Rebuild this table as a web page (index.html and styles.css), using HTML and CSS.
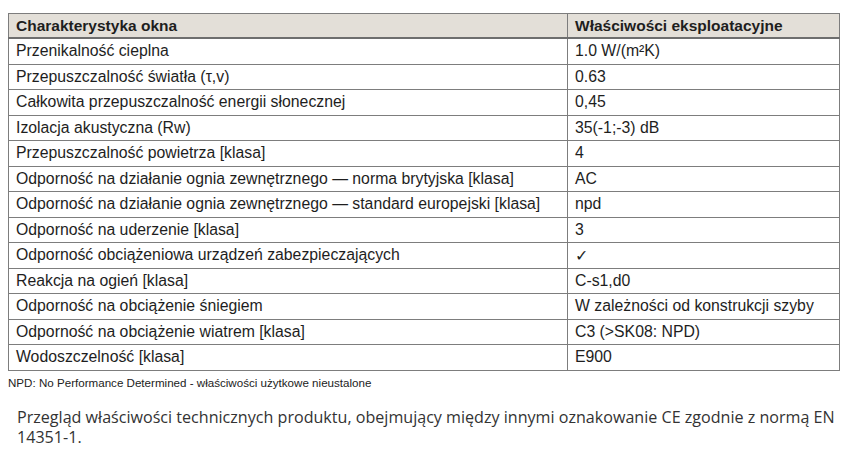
FILE: index.html
```html
<!DOCTYPE html>
<html lang="pl">
<head>
<meta charset="utf-8">
<link rel="stylesheet" href="styles.css">
</head>
<body>
<div class="page">
  <table class="spec">
    <thead>
      <tr><th class="c1">Charakterystyka okna</th><th class="c2">Właściwości eksploatacyjne</th></tr>
    </thead>
    <tbody>
      <tr><td>Przenikalność cieplna</td><td>1.0 W/(m²K)</td></tr>
      <tr><td>Przepuszczalność światła (τ,v)</td><td>0.63</td></tr>
      <tr><td>Całkowita przepuszczalność energii słonecznej</td><td>0,45</td></tr>
      <tr><td>Izolacja akustyczna (Rw)</td><td>35(-1;-3) dB</td></tr>
      <tr><td>Przepuszczalność powietrza [klasa]</td><td>4</td></tr>
      <tr><td>Odporność na działanie ognia zewnętrznego — norma brytyjska [klasa]</td><td>AC</td></tr>
      <tr><td>Odporność na działanie ognia zewnętrznego — standard europejski [klasa]</td><td>npd</td></tr>
      <tr><td>Odporność na uderzenie [klasa]</td><td>3</td></tr>
      <tr><td>Odporność obciążeniowa urządzeń zabezpieczających</td><td>✓</td></tr>
      <tr><td>Reakcja na ogień [klasa]</td><td>C-s1,d0</td></tr>
      <tr><td>Odporność na obciążenie śniegiem</td><td>W zależności od konstrukcji szyby</td></tr>
      <tr><td>Odporność na obciążenie wiatrem [klasa]</td><td>C3 (&gt;SK08: NPD)</td></tr>
      <tr><td>Wodoszczelność [klasa]</td><td>E900</td></tr>
    </tbody>
  </table>
  <p class="note">NPD: No Performance Determined - właściwości użytkowe nieustalone</p>
  <p class="caption">Przegląd właściwości technicznych produktu, obejmujący między innymi oznakowanie CE zgodnie z normą EN 14351-1.</p>
</div>
</body>
</html>
```
FILE: styles.css
```css
html, body {
  margin: 0;
  padding: 0;
  background: #ffffff;
}
.page {
  padding: 13px 0 0 8px;
  width: 832px;
  font-family: "Liberation Sans", Arial, sans-serif;
  color: #1e1e1e;
}
.spec {
  border-collapse: collapse;
  width: 832px;
  table-layout: fixed;
}
.spec th, .spec td {
  border: 1px solid #7d7d7d;
  text-align: left;
  padding: 0 7px;
  font-size: 15.8px;
  white-space: nowrap;
}
.spec th {
  background: #e3dfd8;
  font-weight: bold;
  font-size: 15.5px;
  height: 23px;
  border-bottom: 2px solid #6e6e6e;
}
.spec td {
  height: 24.5px;
}
.spec .c1 { width: 544px; }
.note {
  margin: 5px 0 0 0;
  font-size: 11.6px;
  color: #222;
}
.caption {
  margin: 18px 0 0 9px;
  font-family: "Open Sans", "Noto Sans", sans-serif;
  font-size: 16.1px;
  line-height: 20px;
  color: #333;
  width: 828px;
}
```
